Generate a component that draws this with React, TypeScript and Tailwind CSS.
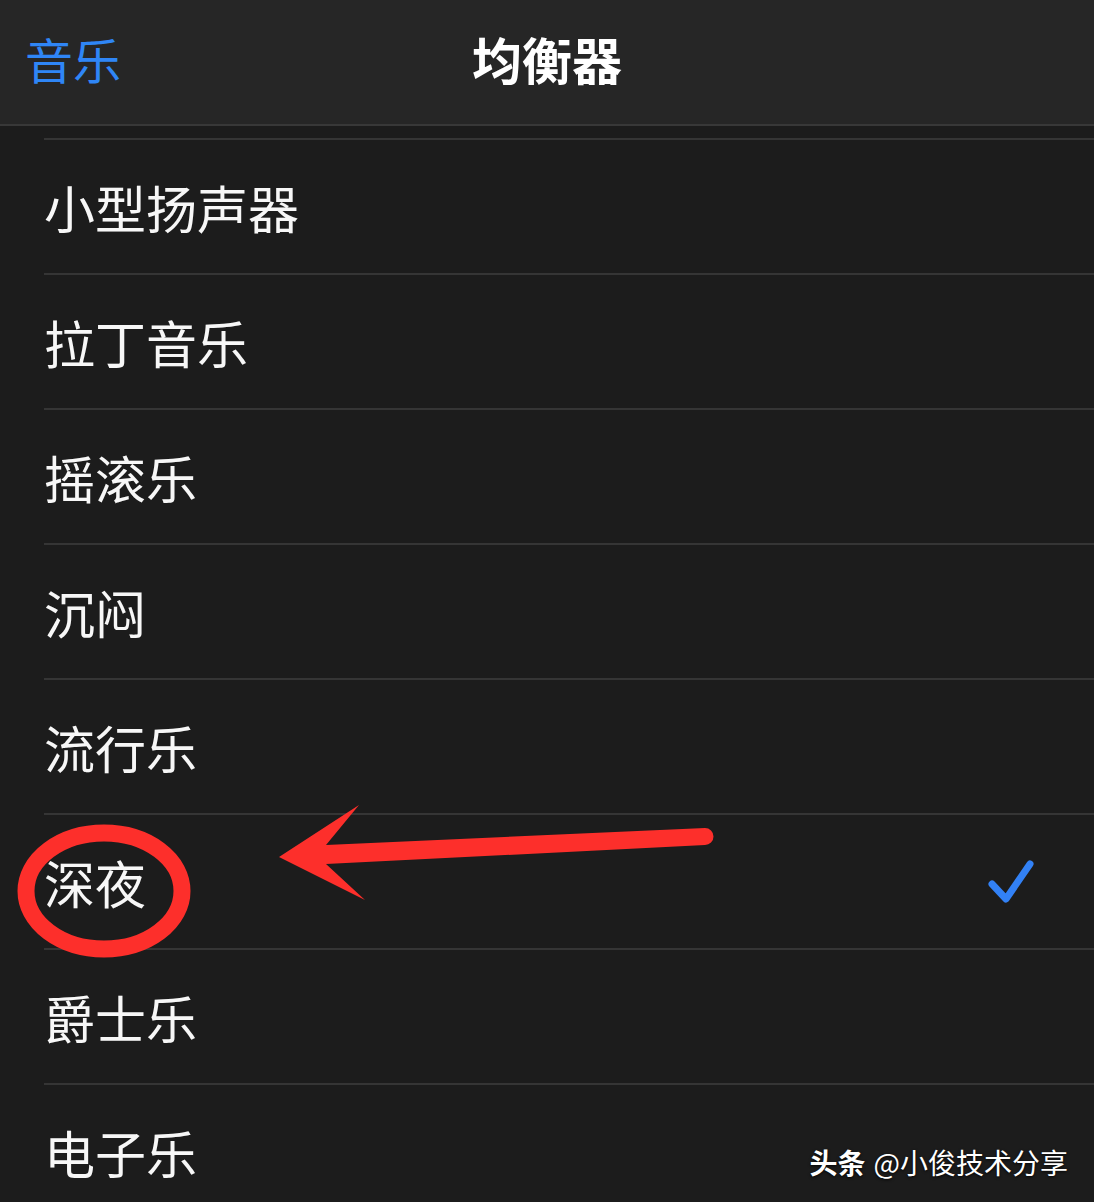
const rows = ["小型扬声器", "拉丁音乐", "摇滚乐", "沉闷", "流行乐", "深夜", "爵士乐", "电子乐"];

const font = { fontFamily: '"Noto Sans CJK SC", "Noto Sans", sans-serif' };

const Check = () => (
    <svg width="52" height="52" viewBox="0 0 52 52" fill="none">
        <path
            d="M7 29 L21 44 L45 9"
            stroke="#3281f5"
            strokeWidth="7"
            strokeLinecap="round"
            strokeLinejoin="round"
        />
    </svg>
);

const Annotation = () => (
    <svg
        className="absolute left-0 top-0 pointer-events-none"
        width="1094"
        height="1202"
        viewBox="0 0 1094 1202"
    >
        <ellipse cx="104" cy="891" rx="78" ry="58" fill="none" stroke="#fd2f2b" strokeWidth="17" />
        <path
            d="M279 857 L359 805 L326 845 L705 828 A8.5 8.5 0 0 1 705 845 L326 864 L365 900 Z"
            fill="#fd2f2b"
        />
    </svg>
);

export default function App() {
    return (
        <div className="relative w-[1094px] h-[1202px] overflow-hidden bg-[#1c1c1c]" style={font}>
            <div className="grid grid-cols-3 items-center h-[126px] bg-[#262626] border-b-2 border-[#383838] pb-[8px]">
                <div className="pl-[25px] text-[48px] leading-none text-[#2f86f6]">音乐</div>
                <div className="text-center text-[50px] leading-none font-bold text-white">均衡器</div>
                <div />
            </div>

            <div className="h-[12px]" />

            {rows.map((label) => (
                <div
                    key={label}
                    className="ml-[44px] h-[135px] border-t-2 border-[#353535] flex items-center justify-between pt-[2px]"
                >
                    <span className="text-[51px] leading-none text-[#f7f7f7]">{label}</span>
                    {label === "深夜" && (
                        <span className="mr-[57px] -mt-[4px]">
                            <Check />
                        </span>
                    )}
                </div>
            ))}

            <Annotation />

            <div
                className="absolute right-[26px] bottom-[26px] text-[28px] leading-none text-white flex items-center"
                style={{ textShadow: "0 1px 3px rgba(0,0,0,0.9)" }}
            >
                <span className="font-bold">头条</span>
                <span className="ml-[8px]">@小俊技术分享</span>
            </div>
        </div>
    );
}
